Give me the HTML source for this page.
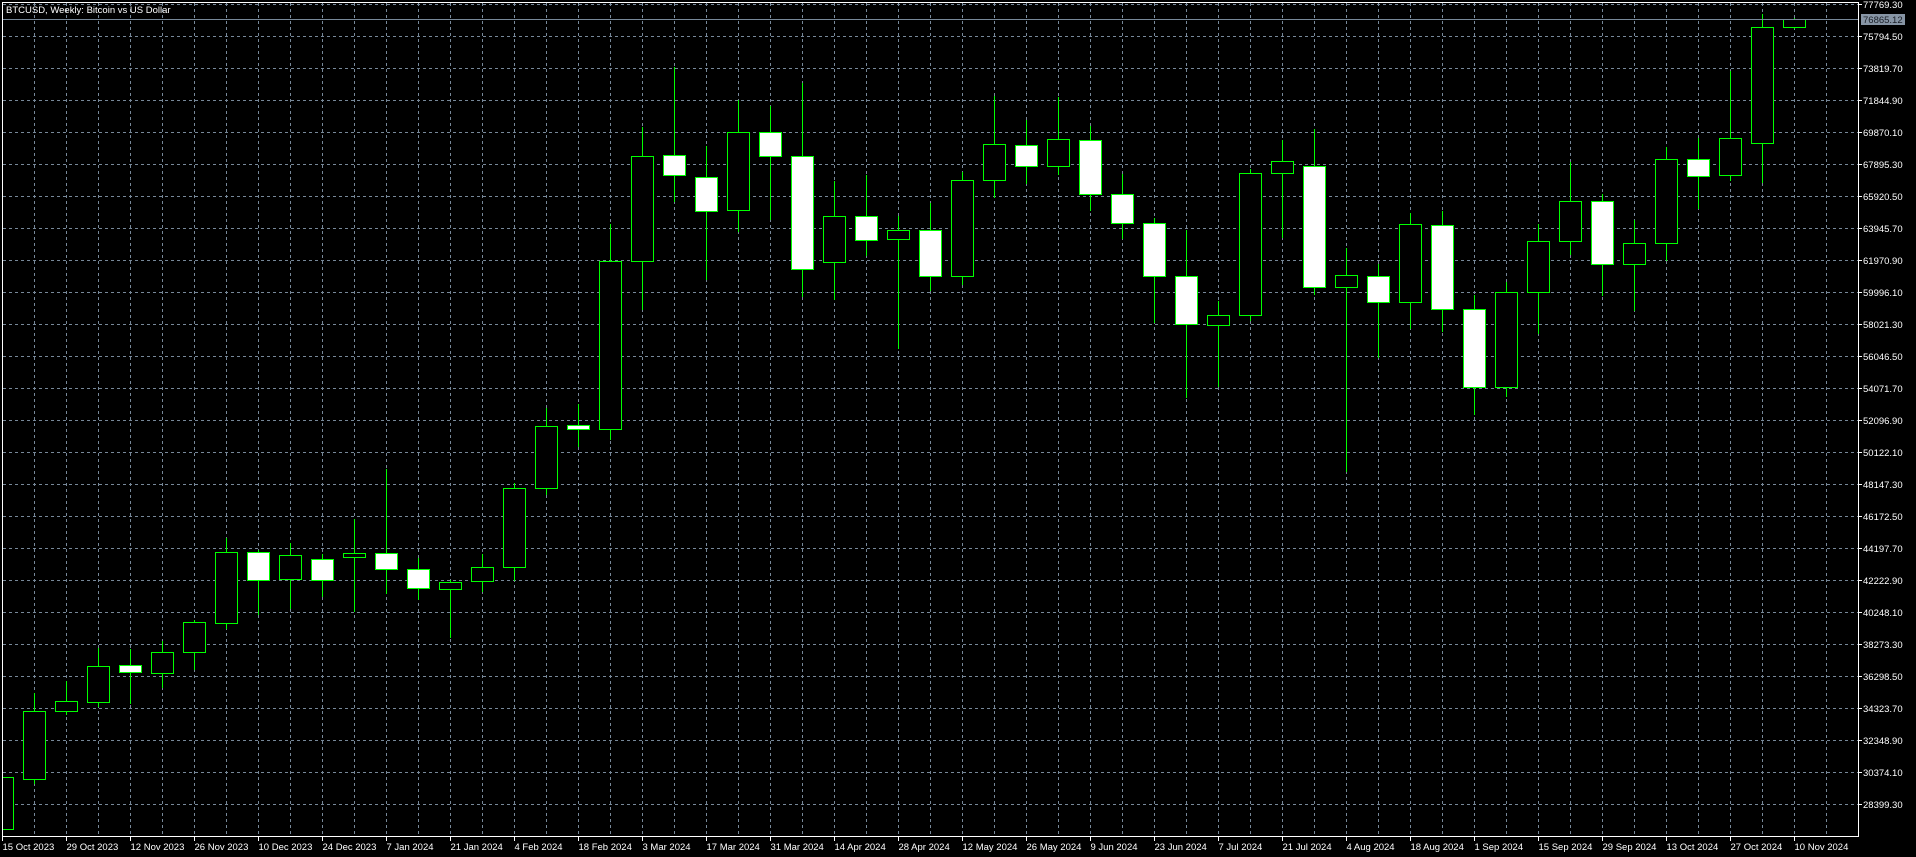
<!DOCTYPE html>
<html><head><meta charset="utf-8"><style>
html,body{margin:0;padding:0;background:#000;width:1916px;height:857px;overflow:hidden}
svg{display:block}
text{font-family:"Liberation Sans",sans-serif;font-size:9.5px;fill:#fff}
</style></head><body>
<svg width="1916" height="857" viewBox="0 0 1916 857" xmlns="http://www.w3.org/2000/svg" shape-rendering="crispEdges">
<rect width="1916" height="857" fill="#000"/>
<defs><clipPath id="c"><rect x="3" y="3" width="1855" height="833"/></clipPath></defs>
<g stroke="#778899" stroke-width="1" stroke-dasharray="3,3" id="grid"></g>
<g id="candles" clip-path="url(#c)"></g>
<line x1="3" y1="19.5" x2="1858" y2="19.5" stroke="#778899"/>
<rect x="2.5" y="2.5" width="1856" height="834" fill="none" stroke="#fff"/>
<g id="axes" stroke="#fff"></g>
<g id="labels"></g>
<rect x="1861" y="14" width="44" height="11" fill="#8795a5"/>
<text x="1863" y="23" style="fill:#1a1f28">76865.12</text>
<text x="6" y="13">BTCUSD, Weekly:  Bitcoin vs US Dollar</text>
</svg>
<script>
var ns="http://www.w3.org/2000/svg";
function el(p,t,a,txt){var e=document.createElementNS(ns,t);for(var k in a)e.setAttribute(k,a[k]);if(txt)e.textContent=txt;p.appendChild(e);return e;}
var g=document.getElementById('grid');
for(var k=0;k<=56;k++){var x=34.5+32*k;el(g,'line',{x1:x,y1:3,x2:x,y2:836});}
for(var k=0;k<=25;k++){var y=4.5+32*k;el(g,'line',{x1:3,y1:y,x2:1858,y2:y});}
var d=[[0,'b',777,829,775,831],[1,'b',711,779,693,784],[2,'b',701,711,681,715],[3,'b',666,702,648,707],[4,'s',665,672,649,704],[5,'b',652,673,641,688],[6,'b',622,652,620,670],[7,'b',552,623,538,629],[8,'s',552,580,550,615],[9,'b',555,579,543,609],[10,'s',559,580,554,597],[11,'b',553,557,519,612],[12,'s',553,569,469,594],[13,'s',569,588,558,600],[14,'b',582,589,580,638],[15,'b',567,581,554,592],[16,'b',488,567,483,581],[17,'b',426,488,408,495],[18,'s',425,429,404,447],[19,'b',261,429,224,440],[20,'b',156,261,127,310],[21,'s',155,175,67,202],[22,'s',177,211,146,280],[23,'b',132,210,100,232],[24,'s',132,156,106,220],[25,'s',156,269,83,297],[26,'b',216,262,181,300],[27,'s',216,240,175,256],[28,'b',230,239,216,349],[29,'s',230,276,203,291],[30,'b',180,276,172,285],[31,'b',144,180,96,198],[32,'s',145,166,120,184],[33,'b',139,166,97,175],[34,'s',140,194,126,211],[35,'s',194,223,174,239],[36,'s',223,276,218,323],[37,'s',276,324,230,398],[38,'b',315,325,301,387],[39,'b',173,315,169,321],[40,'b',161,173,140,238],[41,'s',166,287,129,295],[42,'b',275,287,248,472],[43,'s',276,302,264,358],[44,'b',224,302,213,329],[45,'s',225,309,211,332],[46,'s',309,387,295,415],[47,'b',292,387,282,397],[48,'b',241,292,224,334],[49,'b',201,241,162,255],[50,'s',201,264,194,296],[51,'b',243,264,220,311],[52,'b',159,243,147,261],[53,'s',159,176,138,209],[54,'b',138,175,71,181],[55,'b',27,143,14,183],[56,'b',19,27,18,29]];
var c=document.getElementById('candles');
d.forEach(function(r){var cx=2.5+32*r[0];
el(c,'line',{x1:cx,y1:r[4],x2:cx,y2:r[5],stroke:'#00ff00'});
el(c,'rect',{x:cx-11,y:r[2]+0.5,width:22,height:Math.max(1,r[3]-r[2]),fill:r[1]=='s'?'#fff':'#000',stroke:'#00ff00'});});
var a=document.getElementById('axes'),L=document.getElementById('labels');
var dates=['15 Oct 2023','29 Oct 2023','12 Nov 2023','26 Nov 2023','10 Dec 2023','24 Dec 2023','7 Jan 2024','21 Jan 2024','4 Feb 2024','18 Feb 2024','3 Mar 2024','17 Mar 2024','31 Mar 2024','14 Apr 2024','28 Apr 2024','12 May 2024','26 May 2024','9 Jun 2024','23 Jun 2024','7 Jul 2024','21 Jul 2024','4 Aug 2024','18 Aug 2024','1 Sep 2024','15 Sep 2024','29 Sep 2024','13 Oct 2024','27 Oct 2024','10 Nov 2024'];
dates.forEach(function(t,k){var x=2.5+64*k;el(a,'line',{x1:x,y1:836,x2:x,y2:841});el(L,'text',{x:x,y:850},t);});
for(var k=0;k<=25;k++){var y=4.5+32*k;el(a,'line',{x1:1858,y1:y,x2:1862,y2:y});
el(L,'text',{x:1863,y:y+3.5},(77769.30-1974.8*k).toFixed(2));}
</script>
</body></html>
